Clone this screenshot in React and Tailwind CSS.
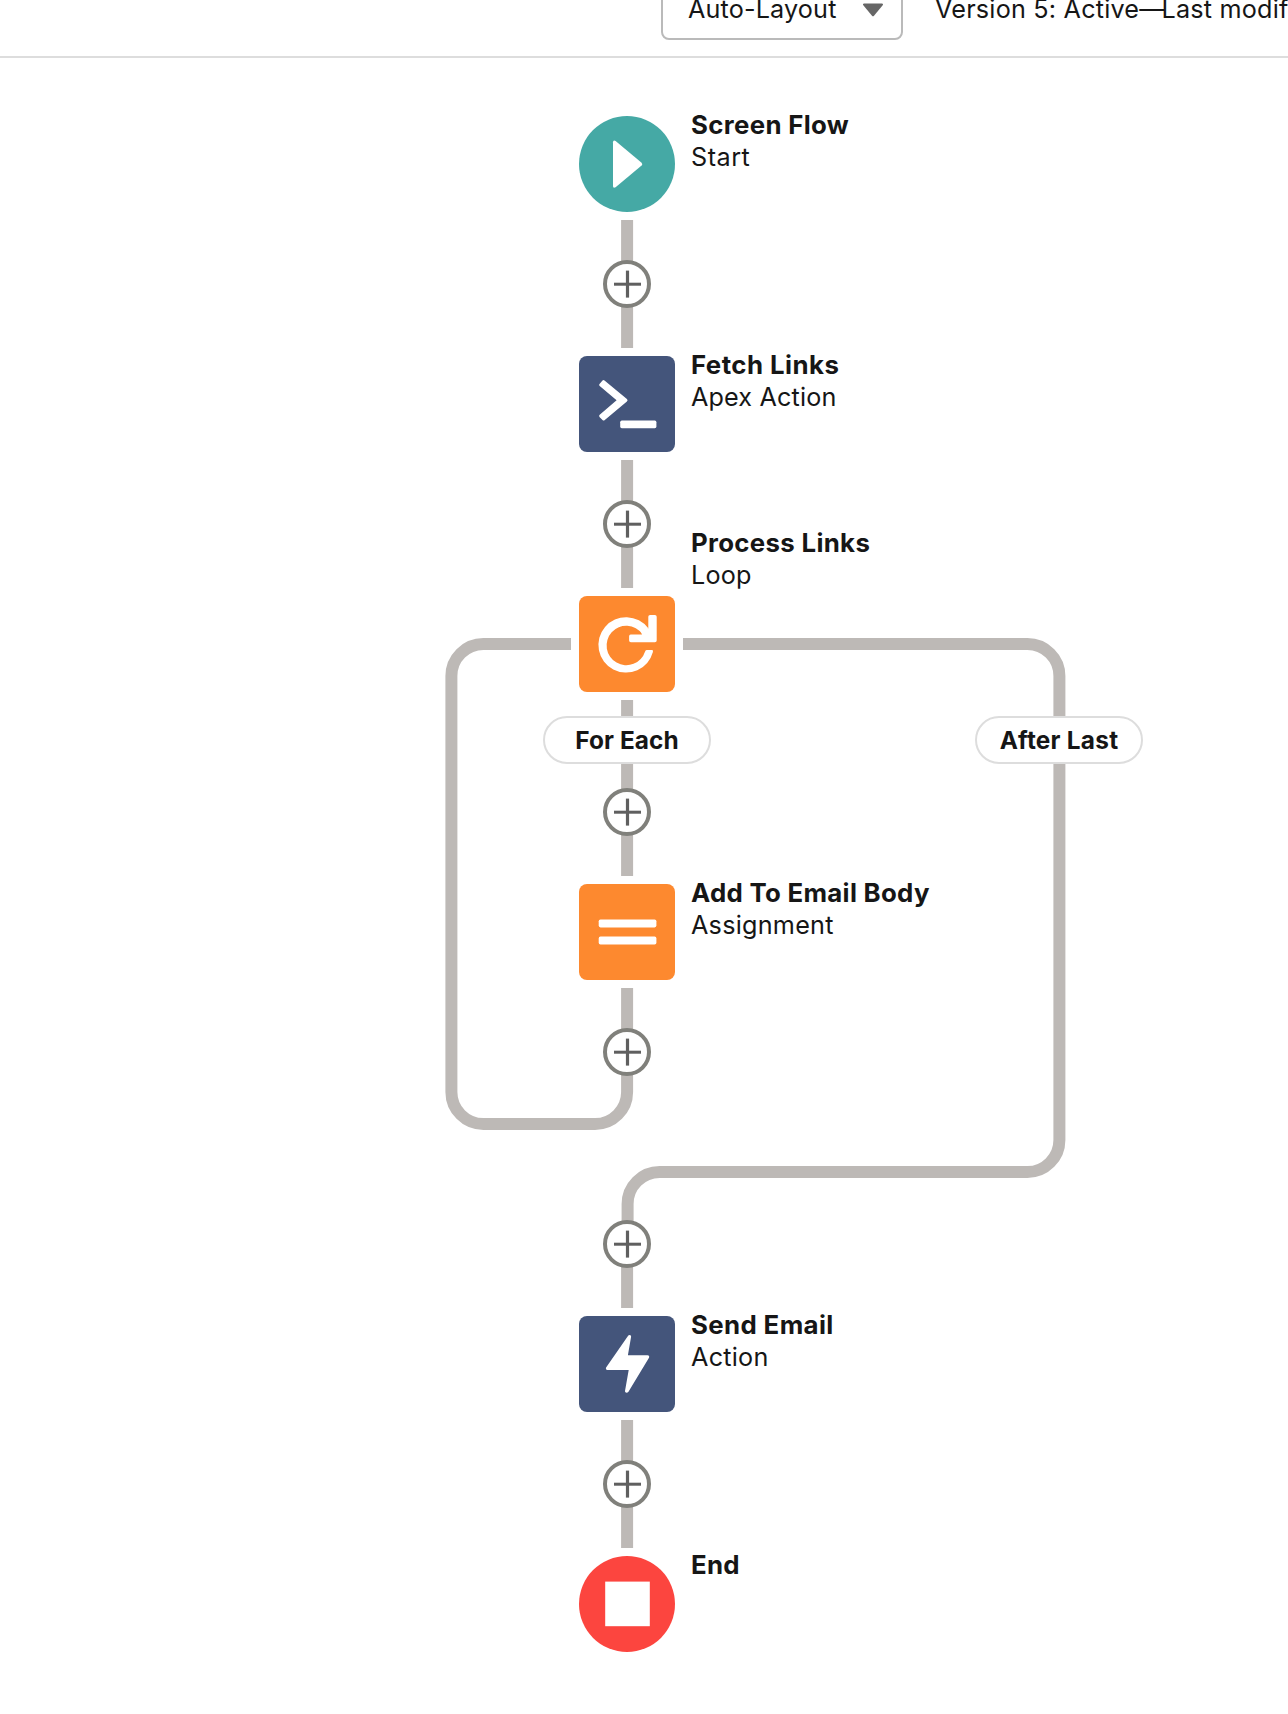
import React from "react";

const CONNECTOR = "#bdb9b6";

function PlayIcon() {
  return (
    <svg viewBox="0 0 96 96" className="size-24">
      <path d="M34 26.300 Q34 23.600 36.600 25 L62.600 46.800 Q64 48.200 62.600 49.600 L36.600 71.200 Q34 72.600 34 70 Z" fill="#fff" />
    </svg>
  );
}

function ApexIcon() {
  return (
    <svg viewBox="0 0 96 96" className="size-24" fill="#fff">
      <path d="M23.500 24.600 Q24.500 23.600 25.500 24.400 L47.900 43 Q49.300 44.300 47.900 45.600 L25.500 64.300 Q24.500 65 23.500 64.100 L20.500 60.900 Q19.600 59.800 20.700 58.800 L37.600 44.300 L20.700 30 Q19.600 29 20.500 27.900 Z" />
      <rect x="41.200" y="64.600" width="36.200" height="7.600" rx="1.600" />
    </svg>
  );
}

function LoopIcon() {
  return (
    <svg viewBox="0 0 96 96" className="size-24" fill="#fff">
      <path d="M73 54 H68 Q66.600 54 66.100 55.400 A19.700 19.700 0 1 1 63.300 38 L69.300 32.300 A27.700 27.700 0 1 0 73.900 56 Q74.500 54 73 54 Z" />
      <path d="M51.700 38.500 H63 L61 33 L69.300 32.500 V20.800 Q69.300 19 71.100 19 H75.900 Q77.700 19 77.700 20.800 V44.400 Q77.700 46.200 75.900 46.200 H51.900 Q50.100 46.200 50.100 44.400 V40.300 Q50.100 38.500 51.700 38.500 Z" />
    </svg>
  );
}

function AssignmentIcon() {
  return (
    <svg viewBox="0 0 96 96" className="size-24" fill="#fff">
      <rect x="19.700" y="35.400" width="57.700" height="8" rx="1.800" />
      <rect x="19.700" y="52.600" width="57.700" height="8" rx="1.800" />
    </svg>
  );
}

function BoltIcon() {
  return (
    <svg viewBox="0 0 96 96" className="size-24">
      <path d="M49.300 19.600 Q50.300 18.600 51.500 19.300 Q52.200 19.800 52.100 20.800 L48.900 39.200 H68.500 Q70.800 39.600 70 41.800 L49.300 75.900 Q48.300 77 46.900 76.600 Q45.900 76.200 46 75 L49.700 54 H28.500 Q26.300 53.600 27.100 51.400 Z" fill="#fff" />
    </svg>
  );
}

function StopIcon() {
  return (
    <svg viewBox="0 0 96 96" className="size-24" fill="#fff">
      <rect x="26.200" y="25.600" width="44.600" height="44.600" />
    </svg>
  );
}

function Node({ shape, icon, title, titleClass, subtitle, subtitleClass, labelClass = "-mt-[7px]" }) {
  return (
    <div className="flex h-24 items-start gap-4">
      <div className={"size-24 shrink-0 " + shape}>{icon}</div>
      <div className={"text-[25.200px] leading-8 whitespace-nowrap " + labelClass}>
        <div className={"text-[25.800px] font-bold " + titleClass}>{title}</div>
        {subtitle && <div className={subtitleClass}>{subtitle}</div>}
      </div>
    </div>
  );
}

function AddButton() {
  return (
    <button
      aria-label="Add element"
      className="flex size-12 shrink-0 items-center justify-center rounded-full border-4 border-[#80807b] bg-white"
    >
      <svg viewBox="0 0 40 40" className="size-10 shrink-0" fill="#5f5f5f">
        <rect x="7" y="18.700" width="27" height="3" />
        <rect x="18.900" y="6.600" width="3.200" height="27" />
      </svg>
    </button>
  );
}

function Stem({ children }) {
  return <div className="flex w-24 flex-col items-center py-12">{children || <AddButton />}</div>;
}

function Branch({ className, children }) {
  return (
    <div className={"flex h-12 w-42 items-center justify-center rounded-full border-2 border-[#dddddd] bg-white pt-px text-[24.400px] font-bold whitespace-nowrap " + className}>
      {children}
    </div>
  );
}

function Connectors() {
  return (
    <svg viewBox="0 58 1288 1656" className="absolute inset-0 h-[1656px] w-[1288px]" fill="none" stroke={CONNECTOR} strokeWidth="12">
      <path d="M627.100 220 V348 M627.100 460 V588 M627.100 700 V876 M627.100 1420 V1548" />
      <path d="M571 644 H483.400 A32 32 0 0 0 451.400 676 V1092 A32 32 0 0 0 483.400 1124 H595.100 A32 32 0 0 0 627.100 1092 V988" />
      <path d="M683 644 H1027.400 A32 32 0 0 1 1059.400 676 V1140 A32 32 0 0 1 1027.400 1172 H659.600 A32 32 0 0 0 627.600 1204 V1240" />
      <path d="M627.100 1240 V1308" />
    </svg>
  );
}

export default function App() {
  return (
    <div className="h-[1714px] w-[1288px] overflow-hidden bg-white font-['Inter',sans-serif] text-[#161616] [font-optical-sizing:none] [font-variation-settings:'opsz'_14]">
      <header className="flex h-[58px] items-start overflow-hidden border-b-2 border-[#dddddd] pl-[661px] text-[25.200px] leading-8">
        <div className="-mt-6 flex h-16 w-[242px] shrink-0 items-center justify-between rounded-lg border-2 border-[#bababa] pt-0.5 pr-[17px] pl-[25px]">
          <span className="tracking-[0.150px] whitespace-nowrap">Auto-Layout</span>
          <svg viewBox="0 0 22 14" className="mt-0.5 h-[14px] w-[22px] shrink-0">
            <path d="M2 0.500 H20 Q21.600 0.700 20.900 2 L12 12.800 Q11 13.800 10 12.800 L1.100 2 Q0.400 0.700 2 0.500 Z" fill="#666" />
          </svg>
        </div>
        <span className="-mt-[7px] ml-8 shrink-0 tracking-[0.200px] whitespace-nowrap">
          Version 5: Active<span className="tracking-[-3px]">—</span>Last modified
        </span>
      </header>

      <main className="relative h-[1656px] pt-[58px] pl-[579px]">
        <Connectors />
        <div className="relative flex flex-col items-start">
          <Node
            shape="rounded-full bg-[#45a9a5]"
            icon={<PlayIcon />}
            title="Screen Flow"
            titleClass="tracking-[0.340px]"
            subtitle="Start"
            subtitleClass="tracking-[0.500px]"
          />
          <Stem />
          <Node
            shape="rounded-lg bg-[#44557b]"
            icon={<ApexIcon />}
            title="Fetch Links"
            titleClass="tracking-[0.460px]"
            subtitle="Apex Action"
            subtitleClass="tracking-[0.150px]"
          />
          <Stem />
          <Node
            shape="rounded-lg bg-[#fd892f]"
            icon={<LoopIcon />}
            title="Process Links"
            titleClass="tracking-[0.320px]"
            subtitle="Loop"
            subtitleClass="tracking-[0.150px]"
            labelClass="-mt-[69px]"
          />
          <div className="-ml-9 flex gap-[264px] pt-6">
            <Branch className="tracking-[0.100px]">For Each</Branch>
            <Branch className="tracking-[0.250px]">After Last</Branch>
          </div>
          <div className="-mt-6">
            <Stem />
          </div>
          <Node
            shape="rounded-lg bg-[#fd892f]"
            icon={<AssignmentIcon />}
            title="Add To Email Body"
            titleClass="tracking-[0.300px]"
            subtitle="Assignment"
            subtitleClass="tracking-[0.240px]"
          />
          <Stem>
            <div className="flex flex-col gap-36">
              <AddButton />
              <AddButton />
            </div>
          </Stem>
          <Node
            shape="rounded-lg bg-[#44557b]"
            icon={<BoltIcon />}
            title="Send Email"
            titleClass="tracking-[0.380px]"
            subtitle="Action"
            subtitleClass="tracking-[0.250px]"
          />
          <Stem />
          <Node
            shape="rounded-full bg-[#fc453f]"
            icon={<StopIcon />}
            title="End"
            titleClass="tracking-[0.300px]"
          />
        </div>
      </main>
    </div>
  );
}
